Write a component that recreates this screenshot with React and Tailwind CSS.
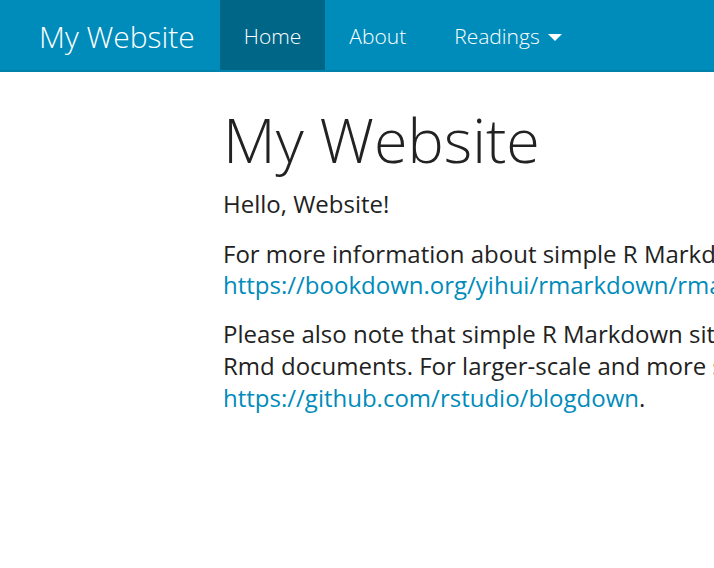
const navItems = [
  { label: 'Home', active: true },
  { label: 'About' },
  { label: 'Readings', dropdown: true },
];

const App = () => {
  return (
    <div className="w-[714px] h-[568px] overflow-hidden bg-white text-[#222222] font-['Open_Sans',sans-serif]">
      <nav className="h-[72px] bg-[#008cba] border-b-2 border-[#0082ad] flex items-start">
        <a className="pl-[39px] pr-[25px] pt-[3px] h-[70px] flex items-center text-[30px] font-light text-white whitespace-nowrap">
          My Website
        </a>
        <ul className="flex">
          {navItems.map((item) => (
            <li key={item.label}>
              <a
                className={`h-[70px] px-[24px] pt-[3px] flex items-center gap-[8px] text-[21px] font-light text-white whitespace-nowrap ${
                  item.active ? 'bg-[#006687]' : ''
                }`}
              >
                {item.label}
                {item.dropdown && (
                  <span className="w-0 h-0 border-l-[7px] border-r-[7px] border-t-[7px] border-l-transparent border-r-transparent border-t-white mt-[2px]"></span>
                )}
              </a>
            </li>
          ))}
        </ul>
      </nav>

      <main className="ml-[223px] w-[940px] whitespace-nowrap">
        <h1 className="mt-[34px] mb-[15px] text-[61px] leading-[67px] font-light">My Website</h1>
        <p className="text-[24px] leading-[31.7px] mb-[18px]">Hello, Website!</p>
        <p className="text-[24px] leading-[31.7px] mb-[17px]">
          For more information about simple R Markdown websites, please read the documentation at
          <br />
          <a className="text-[#008cba]">https://bookdown.org/yihui/rmarkdown/rmarkdown-site.html</a>.
        </p>
        <p className="text-[24px] leading-[31.7px]">
          Please also note that simple R Markdown sites are intended to be very simple sites generated from
          <br />
          Rmd documents. For larger-scale and more sophisticated websites, you may consider using blogdown:
          <br />
          <a className="text-[#008cba]">https://github.com/rstudio/blogdown</a>.
        </p>
      </main>
    </div>
  );
};

export default App;
